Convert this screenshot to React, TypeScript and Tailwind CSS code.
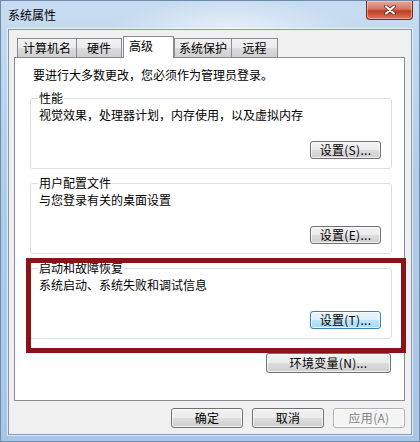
import type { ReactNode } from "react"

const font = { fontFamily: '"Noto Sans CJK SC", "Noto Sans", sans-serif' }

type BtnKind = "normal" | "focus" | "disabled"

function Btn({ children, className = "", kind = "normal" }: { children: ReactNode; className?: string; kind?: BtnKind }) {
  const look =
    kind === "focus"
      ? "border-[#3c7fb1] bg-[linear-gradient(to_bottom,#eaf6fd_0%,#d9f0fc_50%,#bee6fd_50%,#a7d9f5_100%)] text-black"
      : kind === "disabled"
        ? "border-[#adb2b5] bg-[#f4f4f4] text-[#838383]"
        : "border-[#707070] bg-[linear-gradient(to_bottom,#f2f2f2_0%,#ebebeb_50%,#dddddd_50%,#cfcfcf_100%)] text-black"
  return (
    <div
      className={`flex items-center justify-center rounded-[3px] border text-[12px] leading-none tracking-[0.3px] shadow-[inset_0_0_0_1px_rgba(255,255,255,0.7)] ${look} ${className}`}
    >
      {children}
    </div>
  )
}

function Group({ title, text, button, kind }: { title: string; text: string; button: string; kind?: BtnKind }) {
  return (
    <fieldset className="mx-[15px] mr-[12px] rounded-[3px] border border-[#d5dfe5] pb-[9px]">
      <legend className="ml-[7px] px-[1px] text-[12px] leading-[16px]">{title}</legend>
      <div className="mt-[1px] pl-[8px] text-[12px] leading-[16px]">{text}</div>
      <div className="mt-[18px] flex justify-end pr-[10px]">
        <Btn kind={kind} className="h-[18px] w-[71px]">
          {button}
        </Btn>
      </div>
    </fieldset>
  )
}

const tabs = [
  { label: "计算机名", w: "w-[60px]", m: "ml-[3px]" },
  { label: "硬件", w: "w-[46px]", m: "-ml-px" },
  { label: "高级", w: "w-[51px]", m: "ml-[1px]", active: true },
  { label: "系统保护", w: "w-[58px]", m: "ml-0" },
  { label: "远程", w: "w-[47px]", m: "-ml-px" },
]

export default function App() {
  return (
    <div
      className="relative flex h-[442px] w-[420px] flex-col overflow-hidden border border-[#6d8bab] bg-[linear-gradient(to_bottom,#c8dcf1,#b3cde8_40%,#a9c6e5)] text-black"
      style={font}
    >
      {/* title bar */}
      <div className="relative flex h-[28px] shrink-0 items-start bg-[radial-gradient(ellipse_120px_30px_at_55%_100%,rgba(255,255,255,0.6),transparent)]">
        <div className="pl-[7px] pt-[6px] text-[12px] leading-[16px]">系统属性</div>
        <div className="ml-auto mr-[6px] flex h-[19px] w-[47px] items-center justify-center rounded-b-[4px] border border-t-0 border-[#6e2a22] bg-[linear-gradient(to_bottom,#e9a899_0%,#d27764_45%,#c03a20_55%,#d8785e_100%)] shadow-[inset_0_0_0_1px_rgba(255,220,210,0.5)]">
          <svg width="12" height="10" viewBox="0 0 12 10">
            <path d="M2 1.5 L10 8.5 M10 1.5 L2 8.5" stroke="#5a1a12" strokeWidth="3.6" strokeLinecap="round" />
            <path d="M2 1.5 L10 8.5 M10 1.5 L2 8.5" stroke="#ffffff" strokeWidth="2.2" strokeLinecap="round" />
          </svg>
        </div>
      </div>

      {/* client area */}
      <div className="mx-[7px] flex h-[406px] flex-col border border-[#8399b3] bg-[#f0f0f0] pl-[5px] pr-[6px] pt-[6px] shadow-[0_0_0_1px_rgba(255,255,255,0.6)]">
        <div className="flex h-[21px] items-end">
          {tabs.map((t) =>
            t.active ? (
              <div
                key={t.label}
                className={`relative z-10 -mb-px h-[22px] ${t.w} ${t.m} border border-b-0 border-[#898c95] bg-white pl-[5px] pt-[1px] text-[12px] leading-[16px]`}
              >
                {t.label}
              </div>
            ) : (
              <div
                key={t.label}
                className={`flex h-[19px] ${t.w} ${t.m} items-center justify-center border border-b-0 border-[#898c95] bg-[linear-gradient(to_bottom,#f2f2f2,#ebebeb_50%,#dddddd_50%,#cfcfcf)] text-[12px] leading-[16px]`}
              >
                {t.label}
              </div>
            ),
          )}
        </div>

        <div className="flex h-[344px] flex-col border border-[#898c95] bg-white">
          <div className="pl-[18px] pt-[9px] text-[12px] leading-[16px]">要进行大多数更改，您必须作为管理员登录。</div>
          <div className="mt-[7px] flex flex-col gap-[6px]">
            <Group title="性能" text="视觉效果，处理器计划，内存使用，以及虚拟内存" button="设置(S)..." />
            <Group title="用户配置文件" text="与您登录有关的桌面设置" button="设置(E)..." />
            <Group title="启动和故障恢复" text="系统启动、系统失败和调试信息" button="设置(T)..." kind="focus" />
          </div>
          <div className="mt-[14px] flex justify-end pr-[13px]">
            <Btn className="h-[20px] w-[125px]">环境变量(N)...</Btn>
          </div>
        </div>

        <div className="mt-[7px] flex justify-end gap-[9px]">
          <Btn className="h-[20px] w-[72px]">确定</Btn>
          <Btn className="h-[20px] w-[72px]">取消</Btn>
          <Btn kind="disabled" className="h-[20px] w-[72px]">
            应用(A)
          </Btn>
        </div>
      </div>

      {/* red highlight */}
      <div className="pointer-events-none absolute left-[25px] top-[257px] h-[95px] w-[380px] border-[5px] border-[#8b1217]" />
    </div>
  )
}
